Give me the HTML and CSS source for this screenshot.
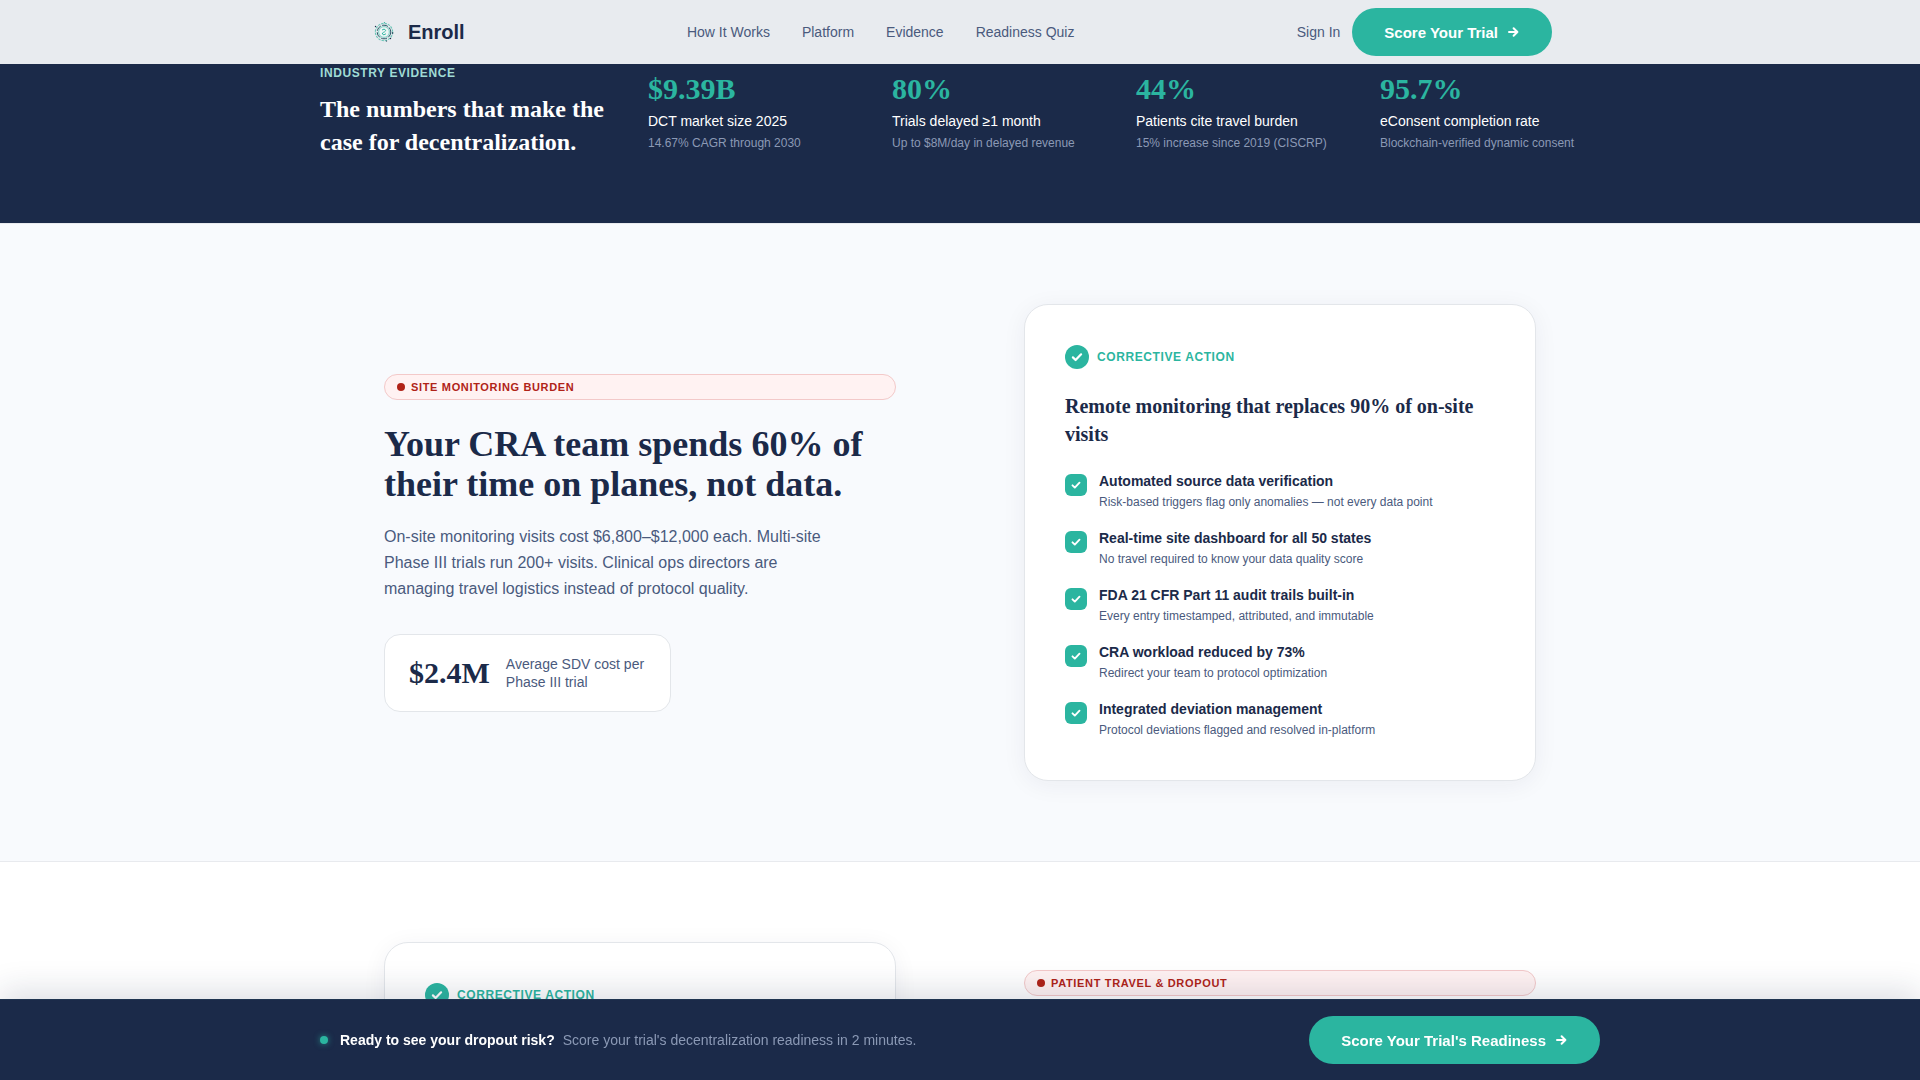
FILE: index.html
```html
<!DOCTYPE html>
<html lang="en">
<head>
    <meta charset="UTF-8">
    <meta name="viewport" content="width=device-width, initial-scale=1.0">
    <title>Enroll</title>
    <link rel="stylesheet" href="styles.css">
</head>
<body>
    <!-- Shared icons -->
    <svg class="icon-defs" aria-hidden="true">
        <symbol id="icon-check" viewBox="0 0 12 12">
            <path d="M2.5 6.3l2.3 2.3 4.7-4.9" fill="none" stroke="currentColor" stroke-width="1.9" stroke-linecap="round" stroke-linejoin="round"/>
        </symbol>
        <symbol id="icon-arrow" viewBox="0 0 14 14">
            <path d="M3 7h8.4M7.6 3.2L11.4 7l-3.8 3.8" fill="none" stroke="currentColor" stroke-width="2" stroke-linecap="round" stroke-linejoin="round"/>
        </symbol>
    </svg>

    <header class="header">
        <div class="header-inner">
            <a href="#" class="logo">
                <svg class="logo-icon" viewBox="0 0 32 32" fill="none" aria-hidden="true">
                    <circle cx="16" cy="16" r="8.6" stroke="#6cc5b8" stroke-width="1.2" stroke-dasharray="2.4 1"/>
                    <circle cx="16" cy="16" r="6.8" stroke="#2f5566" stroke-width="1" stroke-dasharray="6 1.5"/>
                    <circle cx="16" cy="16" r="5.4" fill="#eef6f6" stroke="#8fd3ca" stroke-width="1.2"/>
                    <path d="M14 14.2c1.4-1.8 4.4-.8 3.4.9-.8 1.3-3.6 1.2-3 2.9.6 1.2 2.7.7 3.6-.4" stroke="#2bb5a0" stroke-width="1"/>
                    <circle cx="7.5" cy="10.5" r=".7" fill="#1b2a49"/>
                    <circle cx="24.6" cy="17" r=".8" fill="#1b2a49"/>
                    <circle cx="22.5" cy="22.5" r=".7" fill="#1b2a49"/>
                    <circle cx="16.5" cy="6.5" r=".6" fill="#2bb5a0"/>
                    <circle cx="18.5" cy="25" r=".6" fill="#1b2a49"/>
                </svg>
                <span>Enroll</span>
            </a>
            <nav class="nav">
                <a href="#">How It Works</a>
                <a href="#">Platform</a>
                <a href="#">Evidence</a>
                <a href="#">Readiness Quiz</a>
            </nav>
            <div class="header-actions">
                <a href="#" class="sign-in">Sign In</a>
                <button type="button" class="btn">Score Your Trial <svg class="btn-icon" aria-hidden="true"><use href="#icon-arrow"/></svg></button>
            </div>
        </div>
    </header>

    <main>
        <section class="evidence">
            <div class="evidence-inner">
                <div>
                    <p class="evidence-label">Industry Evidence</p>
                    <h2 class="evidence-title">The numbers that make the case for decentralization.</h2>
                </div>
                <div class="stats">
                    <div class="stat">
                        <div class="stat-value">$9.39B</div>
                        <div class="stat-label">DCT market size 2025</div>
                        <div class="stat-note">14.67% CAGR through 2030</div>
                    </div>
                    <div class="stat">
                        <div class="stat-value">80%</div>
                        <div class="stat-label">Trials delayed ≥1 month</div>
                        <div class="stat-note">Up to $8M/day in delayed revenue</div>
                    </div>
                    <div class="stat">
                        <div class="stat-value">44%</div>
                        <div class="stat-label">Patients cite travel burden</div>
                        <div class="stat-note">15% increase since 2019 (CISCRP)</div>
                    </div>
                    <div class="stat">
                        <div class="stat-value">95.7%</div>
                        <div class="stat-label">eConsent completion rate</div>
                        <div class="stat-note">Blockchain-verified dynamic consent</div>
                    </div>
                </div>
            </div>
        </section>

        <section class="feature feature-tinted">
            <div class="feature-inner">
                <div>
                    <div class="badge">Site Monitoring Burden</div>
                    <h2 class="feature-title">Your CRA team spends 60% of their time on planes, not data.</h2>
                    <p class="feature-text">On-site monitoring visits cost $6,800–$12,000 each. Multi-site Phase III trials run 200+ visits. Clinical ops directors are managing travel logistics instead of protocol quality.</p>
                    <div class="cost">
                        <span class="cost-value">$2.4M</span>
                        <span class="cost-label">Average SDV cost per Phase III trial</span>
                    </div>
                </div>
                <div class="card">
                    <div class="card-head">
                        <span class="card-icon"><svg aria-hidden="true"><use href="#icon-check"/></svg></span>
                        Corrective Action
                    </div>
                    <h3 class="card-title">Remote monitoring that replaces 90% of on-site visits</h3>
                    <ul class="checks">
                        <li>
                            <span class="check-box"><svg aria-hidden="true"><use href="#icon-check"/></svg></span>
                            <div>
                                <div class="check-title">Automated source data verification</div>
                                <div class="check-note">Risk-based triggers flag only anomalies — not every data point</div>
                            </div>
                        </li>
                        <li>
                            <span class="check-box"><svg aria-hidden="true"><use href="#icon-check"/></svg></span>
                            <div>
                                <div class="check-title">Real-time site dashboard for all 50 states</div>
                                <div class="check-note">No travel required to know your data quality score</div>
                            </div>
                        </li>
                        <li>
                            <span class="check-box"><svg aria-hidden="true"><use href="#icon-check"/></svg></span>
                            <div>
                                <div class="check-title">FDA 21 CFR Part 11 audit trails built-in</div>
                                <div class="check-note">Every entry timestamped, attributed, and immutable</div>
                            </div>
                        </li>
                        <li>
                            <span class="check-box"><svg aria-hidden="true"><use href="#icon-check"/></svg></span>
                            <div>
                                <div class="check-title">CRA workload reduced by 73%</div>
                                <div class="check-note">Redirect your team to protocol optimization</div>
                            </div>
                        </li>
                        <li>
                            <span class="check-box"><svg aria-hidden="true"><use href="#icon-check"/></svg></span>
                            <div>
                                <div class="check-title">Integrated deviation management</div>
                                <div class="check-note">Protocol deviations flagged and resolved in-platform</div>
                            </div>
                        </li>
                    </ul>
                </div>
            </div>
        </section>

        <section class="feature">
            <div class="feature-inner feature-top">
                <div class="card">
                    <div class="card-head">
                        <span class="card-icon"><svg aria-hidden="true"><use href="#icon-check"/></svg></span>
                        Corrective Action
                    </div>
                </div>
                <div class="feature-copy">
                    <div class="badge">Patient Travel &amp; Dropout</div>
                </div>
            </div>
        </section>
    </main>

    <!-- Sticky call to action -->
    <div class="cta-bar">
        <div class="cta-inner">
            <div class="cta-message">
                <span class="cta-dot"></span>
                <p><strong>Ready to see your dropout risk?</strong><span class="cta-note">Score your trial's decentralization readiness in 2 minutes.</span></p>
            </div>
            <button type="button" class="btn">Score Your Trial's Readiness <svg class="btn-icon" aria-hidden="true"><use href="#icon-arrow"/></svg></button>
        </div>
    </div>
</body>
</html>
```

FILE: styles.css
```css
:root {
    --navy: #1b2a49;
    --teal: #2bb5a0;
    --slate: #4a5a7d;
    --red: #b02318;
    --serif: "Liberation Serif", "Times New Roman", serif;
}
* {
    box-sizing: border-box;
    margin: 0;
    padding: 0;
}
body {
    font-family: "Liberation Sans", Arial, sans-serif;
    font-size: 14px;
    line-height: 20px;
    color: var(--navy);
    background: #fff;
}
a {
    color: inherit;
    text-decoration: none;
}
.icon-defs {
    display: none;
}

/* Header */
.header {
    position: sticky;
    top: 0;
    z-index: 10;
    background: #e8ebef;
}
.header-inner {
    display: flex;
    justify-content: space-between;
    align-items: center;
    max-width: 1280px;
    height: 64px;
    margin: 0 auto;
    padding: 0 48px;
}
.logo {
    display: flex;
    align-items: center;
    gap: 8px;
    font-size: 20px;
    font-weight: bold;
}
.logo-icon {
    width: 32px;
    height: 32px;
}
.nav {
    display: flex;
    gap: 32px;
    color: var(--slate);
}
.header-actions {
    display: flex;
    align-items: center;
    gap: 12px;
}
.sign-in {
    color: var(--slate);
}
.btn {
    display: inline-flex;
    align-items: center;
    gap: 8px;
    height: 48px;
    padding: 0 32px;
    border: none;
    border-radius: 24px;
    background: var(--teal);
    color: #fff;
    font-family: inherit;
    font-size: 15px;
    font-weight: bold;
    cursor: pointer;
}
.btn:hover {
    background: #249c8a;
}
.btn-icon {
    width: 14px;
    height: 14px;
}

/* Evidence */
.evidence {
    padding-bottom: 64px;
    background: var(--navy);
    color: #fff;
}
.evidence-inner {
    display: grid;
    grid-template-columns: 288px 1fr;
    gap: 40px;
    align-items: center;
    max-width: 1280px;
    margin: 0 auto;
}
.evidence-label {
    margin-bottom: 11px;
    font-size: 12px;
    line-height: 18px;
    font-weight: bold;
    letter-spacing: 0.05em;
    text-transform: uppercase;
    color: #a0dbd5;
}
.evidence-title {
    font-family: var(--serif);
    font-size: 24px;
    line-height: 33px;
}
.stats {
    display: grid;
    grid-template-columns: repeat(4, 1fr);
    gap: 24px;
}
.stat-value {
    margin-bottom: 4px;
    font-family: var(--serif);
    font-size: 30px;
    line-height: 36px;
    font-weight: bold;
    color: var(--teal);
}
.stat-label {
    margin-bottom: 3px;
}
.stat-note {
    font-size: 12px;
    line-height: 18px;
    color: #8b99b5;
}

/* Feature sections */
.feature {
    padding: 80px 0;
    background: #fff;
}
.feature-tinted {
    background: #f8fafd;
    border-top: 1px solid #e8eaee;
    border-bottom: 1px solid #e8eaee;
}
.feature-inner {
    display: grid;
    grid-template-columns: 1fr 1fr;
    gap: 128px;
    align-items: center;
    max-width: 1280px;
    margin: 0 auto;
    padding: 0 64px;
}
.feature-top {
    align-items: start;
}
.feature-copy {
    padding-top: 28px;
}
.badge {
    display: flex;
    align-items: center;
    gap: 6px;
    padding: 4px 12px;
    border: 1px solid #f3c9c9;
    border-radius: 16px;
    background: #fff2f2;
    color: var(--red);
    font-size: 11px;
    line-height: 16px;
    font-weight: bold;
    letter-spacing: 0.06em;
    text-transform: uppercase;
}
.badge::before {
    content: "";
    width: 8px;
    height: 8px;
    border-radius: 50%;
    background: var(--red);
}
.feature-title {
    margin: 24px 0 20px;
    font-family: var(--serif);
    font-size: 36px;
    line-height: 40px;
}
.feature-text {
    max-width: 448px;
    margin-bottom: 32px;
    font-size: 16px;
    line-height: 26px;
    color: var(--slate);
}
.cost {
    display: inline-flex;
    align-items: center;
    gap: 16px;
    padding: 20px 24px;
    border: 1px solid #e3e6ea;
    border-radius: 16px;
    background: #fff;
    vertical-align: top;
}
.cost-value {
    font-family: var(--serif);
    font-size: 30px;
    line-height: 35px;
    font-weight: bold;
}
.cost-label {
    max-width: 140px;
    line-height: 18px;
    color: var(--slate);
}

/* Card */
.card {
    padding: 40px;
    border: 1px solid #e3e6ea;
    border-radius: 24px;
    background: #fff;
    box-shadow: 0 4px 24px rgba(27, 42, 73, 0.06);
}
.card-head {
    display: flex;
    align-items: center;
    gap: 8px;
    font-size: 12px;
    line-height: 24px;
    font-weight: bold;
    letter-spacing: 0.05em;
    text-transform: uppercase;
    color: var(--teal);
}
.card-icon,
.check-box {
    display: flex;
    flex: none;
    align-items: center;
    justify-content: center;
    background: var(--teal);
    color: #fff;
}
.card-icon {
    width: 24px;
    height: 24px;
    border-radius: 50%;
}
.card-icon svg {
    width: 14px;
    height: 14px;
}
.check-box svg {
    width: 12px;
    height: 12px;
}
.card-title {
    margin: 23px 0 25px;
    font-family: var(--serif);
    font-size: 20px;
    line-height: 28px;
}
.checks {
    display: grid;
    gap: 18px;
    list-style: none;
}
.checks li {
    display: flex;
    gap: 12px;
}
.check-box {
    width: 22px;
    height: 22px;
    margin-top: 1px;
    border-radius: 6px;
}
.check-title {
    margin-bottom: 3px;
    line-height: 17px;
    font-weight: bold;
}
.check-note {
    font-size: 12px;
    line-height: 19px;
    color: var(--slate);
}

/* Bottom bar */
.cta-bar {
    position: fixed;
    left: 0;
    right: 0;
    bottom: 0;
    z-index: 10;
    padding: 16px 0;
    border-top: 1px solid #1f3450;
    background: var(--navy);
    color: #fff;
    box-shadow: 0 -8px 32px rgba(27, 42, 73, 0.15);
}
.cta-inner {
    display: flex;
    justify-content: space-between;
    align-items: center;
    max-width: 1280px;
    margin: 0 auto;
}
.cta-message {
    display: flex;
    align-items: center;
    gap: 12px;
}
.cta-dot {
    width: 8px;
    height: 8px;
    border-radius: 50%;
    background: var(--teal);
    box-shadow: 0 0 6px rgba(43, 181, 160, 0.7);
}
.cta-note {
    margin-left: 8px;
    color: #8b99b5;
}
```
